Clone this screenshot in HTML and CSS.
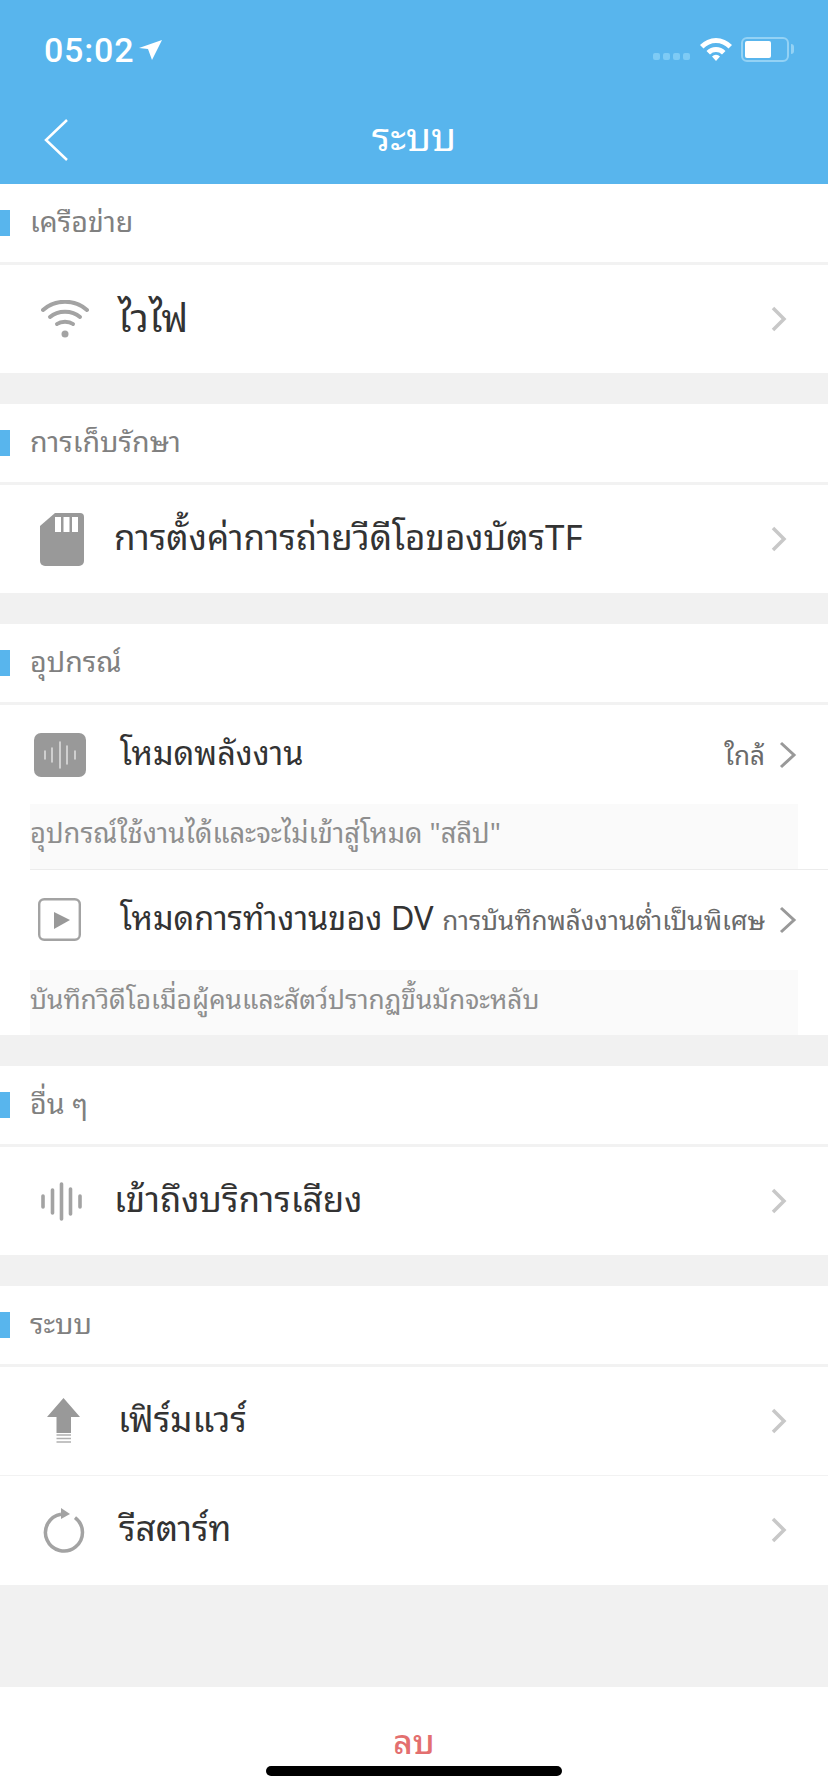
FILE: index.html
```html
<!DOCTYPE html>
<html lang="th">
<head>
<meta charset="utf-8">
<title>ระบบ</title>
<link rel="stylesheet" href="styles.css">
</head>
<body>
<div class="phone">
  <header class="top">
    <div class="status">
      <div class="clock"><span>05:02</span>
        <svg class="loc" width="23" height="20" viewBox="0 0 23 20"><path d="M0 8 L23 0 L13 20 L9 9 Z" fill="#fff"/></svg>
      </div>
      <div class="indicators">
        <div class="signal"><i></i><i></i><i></i><i></i></div>
        <svg class="wifi-s" width="32" height="24" viewBox="0 0 32 24"><path d="M0 8 A22 22 0 0 1 32 8 L28.500 11.500 A17 17 0 0 0 3.500 11.500 Z M6.500 14 A13.500 13.500 0 0 1 25.500 14 L22 17.500 A8.500 8.500 0 0 0 10 17.500 Z M12 19.500 A5.500 5.500 0 0 1 20 19.500 L16 24 Z" fill="#fff"/></svg>
        <div class="battery"><div class="level"></div></div>
        <div class="nub"></div>
      </div>
    </div>
    <div class="nav">
      <svg class="back" width="26" height="42" viewBox="0 0 26 42"><path d="M23 1 L2 21 L23 41" fill="none" stroke="#fff" stroke-width="2.500"/></svg>
      <div class="title">ระบบ</div>
    </div>
  </header>

  <section class="group">
    <h2 class="label">เครือข่าย</h2>
    <div class="row">
      <svg class="icon ic-wifi" width="48" height="38" viewBox="0 0 48 38"><g fill="none" stroke="#a3a3a3" stroke-width="4" stroke-linecap="round"><path d="M2 10 C14 -1 34 -1 46 10"/><path d="M9 17 C17 10 31 10 39 17"/><path d="M16 24 C20 21 28 21 32 24"/></g><circle cx="24" cy="34" r="3.500" fill="#a3a3a3"/></svg>
      <span class="name name-wifi">ไวไฟ</span>
      <svg class="chev" width="16" height="26" viewBox="0 0 16 26"><path d="M2 2 L13 13 L2 24" fill="none" stroke="#c8c8c8" stroke-width="3.500"/></svg>
    </div>
  </section>

  <section class="group">
    <h2 class="label">การเก็บรักษา</h2>
    <div class="row">
      <svg class="icon ic-sd" width="44" height="53" viewBox="0 0 44 53"><path d="M15 0 H40 A4 4 0 0 1 44 4 V48 A5 5 0 0 1 39 53 H5 A5 5 0 0 1 0 48 V13 Z" fill="#999"/><path d="M15 4 H21 V19 H15 Z M23.500 4 H29.500 V19 H23.500 Z M32 4 H38 V19 H32 Z" fill="#fff"/></svg>
      <span class="name">การตั้งค่าการถ่ายวีดีโอของบัตรTF</span>
      <svg class="chev" width="16" height="26" viewBox="0 0 16 26"><path d="M2 2 L13 13 L2 24" fill="none" stroke="#c8c8c8" stroke-width="3.500"/></svg>
    </div>
  </section>

  <section class="group">
    <h2 class="label">อุปกรณ์</h2>
    <div class="row row-setting">
      <svg class="icon ic-power" width="52" height="44" viewBox="0 0 52 44"><rect width="52" height="44" rx="7" fill="#999"/><g stroke="#e2e2e2" stroke-width="1.500" stroke-linecap="round"><path d="M11 18 V26"/><path d="M18 15 V29"/><path d="M26 9 V35"/><path d="M33 13 V31"/><path d="M41 18 V26"/></g></svg>
      <span class="name name-dev">โหมดพลังงาน</span>
      <span class="value">ใกล้</span>
      <svg class="chev chev-dark" width="18" height="28" viewBox="0 0 18 28"><path d="M2 2 L15 14 L2 26" fill="none" stroke="#999" stroke-width="3"/></svg>
    </div>
    <p class="desc desc-wide">อุปกรณ์ใช้งานได้และจะไม่เข้าสู่โหมด "สลีป"</p>
    <div class="row row-setting row-rule">
      <svg class="icon ic-play" width="43" height="43" viewBox="0 0 43 43"><rect x="1.200" y="1.200" width="40.600" height="40.600" rx="5" fill="none" stroke="#a3a3a3" stroke-width="2.400"/><path d="M16 14 L32 22 L16 31 Z" fill="#999"/></svg>
      <span class="name name-dev">โหมดการทำงานของ DV</span>
      <span class="value">การบันทึกพลังงานต่ำเป็นพิเศษ</span>
      <svg class="chev chev-dark" width="18" height="28" viewBox="0 0 18 28"><path d="M2 2 L15 14 L2 26" fill="none" stroke="#999" stroke-width="3"/></svg>
    </div>
    <p class="desc desc-narrow">บันทึกวิดีโอเมื่อผู้คนและสัตว์ปรากฏขึ้นมักจะหลับ</p>
  </section>

  <section class="group">
    <h2 class="label">อื่น ๆ</h2>
    <div class="row">
      <svg class="icon ic-voice" width="41" height="39" viewBox="0 0 41 39"><g stroke="#a3a3a3" stroke-width="3.600" stroke-linecap="round"><path d="M2 14 V25"/><path d="M11.500 8 V31"/><path d="M20.500 2 V37"/><path d="M29.500 7 V32"/><path d="M39 14 V25"/></g></svg>
      <span class="name">เข้าถึงบริการเสียง</span>
      <svg class="chev" width="16" height="26" viewBox="0 0 16 26"><path d="M2 2 L13 13 L2 24" fill="none" stroke="#c8c8c8" stroke-width="3.500"/></svg>
    </div>
  </section>

  <section class="group">
    <h2 class="label">ระบบ</h2>
    <div class="row">
      <svg class="icon ic-up" width="33" height="46" viewBox="0 0 33 46"><path d="M16.500 0 L33 19 H24 V35 H9.500 V19 H0 Z" fill="#999"/><path d="M9.500 37 H24 M9.500 40.500 H24 M9.500 44 H24" stroke="#b0b0b0" stroke-width="1.500"/></svg>
      <span class="name">เฟิร์มแวร์</span>
      <svg class="chev" width="16" height="26" viewBox="0 0 16 26"><path d="M2 2 L13 13 L2 24" fill="none" stroke="#c8c8c8" stroke-width="3.500"/></svg>
    </div>
    <div class="row row-rule row-last">
      <svg class="icon ic-restart" width="44" height="46" viewBox="0 0 44 46"><path d="M33 10.600 A18.500 18.500 0 1 1 19 7.200" fill="none" stroke="#a3a3a3" stroke-width="3.500"/><path d="M19 1 L28 7 L19 12 Z" fill="#a3a3a3"/></svg>
      <span class="name name-restart">รีสตาร์ท</span>
      <svg class="chev" width="16" height="26" viewBox="0 0 16 26"><path d="M2 2 L13 13 L2 24" fill="none" stroke="#c8c8c8" stroke-width="3.500"/></svg>
    </div>
  </section>

  <footer class="foot">
    <span class="delete">ลบ</span>
    <div class="home"></div>
  </footer>
</div>
</body>
</html>
```
FILE: styles.css
```css
* { box-sizing: border-box; }
html, body { margin: 0; padding: 0; background: #f1f1f1; }
body { font-family: "Noto Sans Thai Looped", "Noto Sans Thai", "Noto Sans", "DejaVu Sans", "Liberation Sans", sans-serif; }
.phone { width: 828px; height: 1792px; display: flex; flex-direction: column; overflow: hidden; }

.top { height: 184px; background: #58b5ed; color: #fff; flex: none; }
.status { height: 88px; display: flex; justify-content: space-between; padding: 33px 34px 0 44px; }
.clock { display: flex; align-items: flex-start; gap: 5px; height: 34px; font: 500 34px/34px Roboto, sans-serif; letter-spacing: 0.8px; }
.loc { margin-top: 7px; }
.indicators { display: flex; align-items: center; height: 34px; margin-top: -1px; }
.signal { display: flex; gap: 3px; margin-top: 14px; margin-right: 10px; }
.signal i { width: 7px; height: 7px; border-radius: 2px; background: #7ecbf5; }
.wifi-s { margin-right: 9px; }
.battery { width: 48px; height: 25px; border: 2px solid #93d2f5; border-radius: 6px; padding: 2px; }
.level { width: 26px; height: 17px; background: #fff; border-radius: 2px; }
.nub { width: 3px; height: 10px; margin-left: 2px; background: #93d2f5; border-radius: 0 3px 3px 0; }

.nav { height: 96px; display: flex; align-items: center; justify-content: center; padding: 0 44px; position: relative; }
.back { position: absolute; left: 44px; top: 31px; }
.title { font-size: 39px; line-height: 1; margin-top: -5px; }

.group { background: #fff; margin-bottom: 31px; flex: none; }
.label { height: 81px; margin: 0; padding-left: 30px; font-weight: 400; font-size: 28.600px; color: #808080; line-height: 71px; border-bottom: 3px solid #f2f2f2; position: relative; }
.label::before { content: ""; position: absolute; left: 0; top: 26px; width: 10px; height: 26px; background: #58b5ed; }

.row { height: 108px; display: flex; align-items: center; padding: 0 41px 0 41px; }
.row-rule { box-shadow: inset 0 1px 0 0 #f2f2f2; }
.row-last { height: 110px; }
.name { font-size: 35px; color: #333; flex: 1; white-space: nowrap; padding-bottom: 10px; }
.name-wifi { font-size: 38px; margin-left: -1px; }
.name-restart { margin-left: 2px; }
.chev { flex: none; }
.icon { flex: none; }

.ic-wifi { margin-right: 30px; }
.ic-sd { margin-left: -1px; margin-right: 30px; }
.ic-voice { margin-right: 32px; }
.ic-up { margin-left: 6px; margin-right: 38px; }
.ic-restart { margin-left: 1px; margin-right: 31px; }

.row-setting { height: 99px; padding: 0 31px 0 34px; }
.ic-play { margin-left: 4px; margin-right: 39px; }
.ic-power { margin-right: 34px; }
.name.name-dev { flex: 1; font-size: 32.500px; }
.value { font-size: 26.100px; color: #6a6a6a; margin-right: 14px; white-space: nowrap; padding-bottom: 4px; }

.desc { height: 65px; margin: 0 30px; line-height: 54px; color: #8e8e8e; background: #fafafa; white-space: nowrap; }
.desc-wide { font-size: 27.300px; }
.desc-narrow { font-size: 26.300px; }
.row-setting.row-rule { height: 101px; background: linear-gradient(#ececec, #ececec) 30px 0 / 100% 1px no-repeat; box-shadow: none; }

.foot { flex: 1; background: #fff; display: flex; flex-direction: column; align-items: center; margin-top: 71px; padding-top: 35px; }
.delete { font-size: 33.500px; line-height: 34px; font-weight: 500; color: #e36f6f; }
.home { width: 296px; height: 10px; border-radius: 5px; background: #000; margin-top: 10px; }
```
